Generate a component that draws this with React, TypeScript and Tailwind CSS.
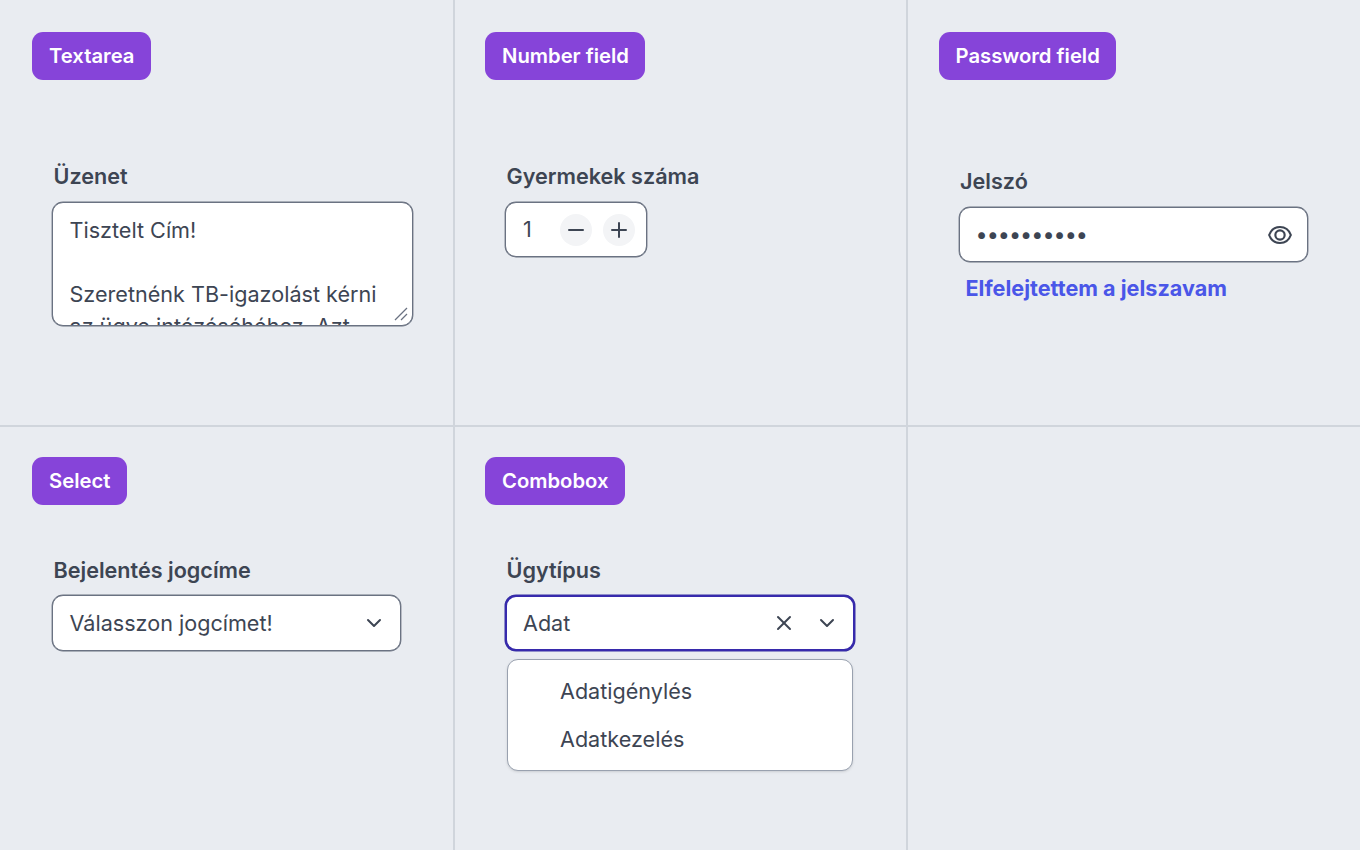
import { useState } from "react";
import { ChevronDown, Minus, Plus, X } from "lucide-react";

const Badge = ({ children }: { children: string }) => (
  <div className="inline-flex h-12 items-center self-start rounded-[11px] bg-[#8644d9] pr-[16.5px] pl-[17px] text-[20.25px] font-semibold text-white">
    {children}
  </div>
);

const Label = ({ children }: { children: string }) => (
  <label className="block pl-[1.5px] text-[21.6px] leading-8 font-semibold">{children}</label>
);

const EyeIcon = () => (
  <svg width="26" height="26" viewBox="0 0 24 24" fill="none" stroke="currentColor" strokeWidth="2">
    <path d="M12 4.6C7.5 4.6 3.6 7.6 2 12c1.6 4.4 5.5 7.4 10 7.4s8.4-3 10-7.4c-1.6-4.4-5.5-7.4-10-7.4Z" />
    <circle cx="12" cy="12" r="4.3" />
  </svg>
);

export default function App() {
  const [message, setMessage] = useState(
    "Tisztelt Cím!\n\nSzeretnénk TB-igazolást kérni az ügye intézéséhéhez. Azt követően tudjuk folytatni a folyamatot."
  );

  return (
    <div className="grid h-[850px] w-[1360px] grid-cols-[455px_453px_452px] grid-rows-[427px_423px] overflow-hidden bg-[#e9ecf1] font-['Inter',sans-serif] text-[21.6px] text-[#3d4553]">
      {/* Textarea */}
      <section className="flex flex-col border-r-2 border-b-2 border-[#d0d5dc] p-8">
        <Badge>Textarea</Badge>
        <div className="mt-[80px] pl-5">
          <Label>Üzenet</Label>
          <div className="relative mt-[10px] w-[361px]">
            <textarea
              className="block h-[124px] w-full resize-none overflow-hidden rounded-[11px] border border-gray-500 bg-white py-[11px] pr-4 pl-[16.5px] leading-8 shadow-[0_0_0_0.4px_#6b7280] outline-none"
              value={message}
              onChange={(e) => setMessage(e.target.value)}
            />
            <svg className="absolute right-[5px] bottom-[5px] h-[14px] w-[14px] text-gray-500" viewBox="0 0 14 14" stroke="currentColor" strokeWidth="1.3">
              <path d="M1 13 13 1M7 13l6-6" />
            </svg>
          </div>
        </div>
      </section>

      {/* Number field */}
      <section className="flex flex-col border-r-2 border-b-2 border-[#d0d5dc] py-8 pr-8 pl-[30px]">
        <Badge>Number field</Badge>
        <div className="mt-[80px] pl-5">
          <Label>Gyermekek száma</Label>
          <div className="mt-[10px] flex h-[55px] w-[142px] items-center rounded-[11px] border border-gray-500 bg-white pl-[17px] shadow-[0_0_0_0.4px_#6b7280]">
            <span className="w-[37px]">1</span>
            <button className="flex h-8 w-8 items-center justify-center rounded-full bg-gray-100">
              <Minus size={24} strokeWidth={2} />
            </button>
            <button className="ml-[11px] flex h-8 w-8 items-center justify-center rounded-full bg-gray-100">
              <Plus size={24} strokeWidth={2} />
            </button>
          </div>
        </div>
      </section>

      {/* Password field */}
      <section className="flex flex-col border-b-2 border-[#d0d5dc] py-8 pr-8 pl-[30.5px]">
        <Badge>Password field</Badge>
        <div className="mt-[85px] pl-5">
          <Label>Jelszó</Label>
          <div className="mt-[10px] flex h-[55px] w-[349px] items-center rounded-[11px] border border-gray-500 bg-white pr-[14px] pl-4 shadow-[0_0_0_0.4px_#6b7280]">
            <input
              type="password"
              defaultValue="jelszo1234"
              className="min-w-0 flex-1 bg-transparent tracking-[-1px] outline-none"
            />
            <EyeIcon />
          </div>
          <a className="mt-[10px] block pl-[7px] text-[21.6px] leading-8 font-bold text-[#4a56e8]">
            Elfelejtettem a jelszavam
          </a>
        </div>
      </section>

      {/* Select */}
      <section className="flex flex-col border-r-2 border-[#d0d5dc] px-8 pt-[30px]">
        <Badge>Select</Badge>
        <div className="mt-[49px] pl-5">
          <Label>Bejelentés jogcíme</Label>
          <div className="mt-[9px] flex h-14 w-[349px] items-center justify-between rounded-[11px] border border-gray-500 bg-white pr-[14px] pl-[16.5px] shadow-[0_0_0_0.4px_#6b7280]">
            <span>Válasszon jogcímet!</span>
            <ChevronDown size={24} strokeWidth={2} />
          </div>
        </div>
      </section>

      {/* Combobox */}
      <section className="flex flex-col border-r-2 border-[#d0d5dc] pt-[30px] pr-8 pl-[30px]">
        <Badge>Combobox</Badge>
        <div className="mt-[49px] pl-5">
          <Label>Ügytípus</Label>
          <div className="mt-[9px] flex h-14 w-[350px] items-center rounded-[11px] border-2 border-indigo-800 bg-white pr-[14px] pl-4 shadow-[0_0_0_0.5px_#3730a3]">
            <span className="flex-1">Adat</span>
            <X size={24} strokeWidth={2} />
            <ChevronDown size={24} strokeWidth={2} className="ml-[19px]" />
          </div>
          <ul className="mt-2 ml-[2px] w-[346px] rounded-[11px] border border-gray-400 bg-white py-[7px] pl-[52px] shadow-sm">
            <li className="flex h-12 items-center">Adatigénylés</li>
            <li className="flex h-12 items-center">Adatkezelés</li>
          </ul>
        </div>
      </section>

      <section />
    </div>
  );
}
